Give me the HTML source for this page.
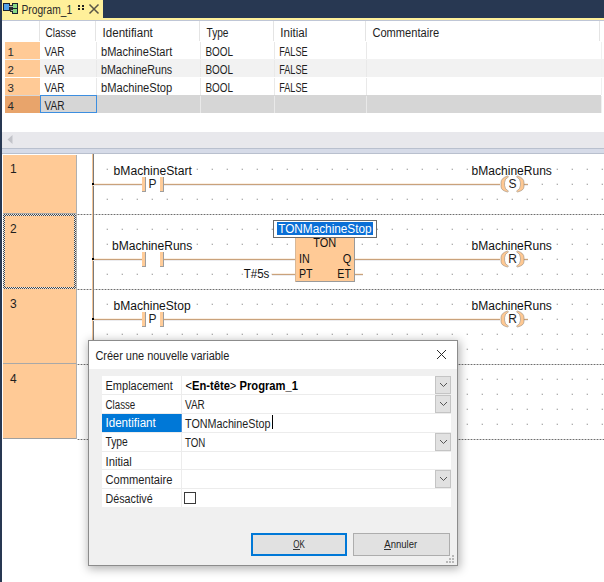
<!DOCTYPE html>
<html><head><meta charset="utf-8"><style>
html,body{margin:0;padding:0;background:#fff;overflow:hidden;}
svg{display:block;font-family:"Liberation Sans", sans-serif;}
</style></head><body>
<svg width="604" height="582" viewBox="0 0 604 582" shape-rendering="crispEdges">
<rect x="0" y="0" width="604" height="582" fill="#ffffff" />
<rect x="0" y="0" width="604" height="18" fill="#283852" />
<rect x="2" y="0" width="101" height="18" fill="#fff09a" />
<rect x="2" y="18" width="602" height="2" fill="#fff09a" />
<rect x="2" y="20" width="602" height="1" fill="#bfc6d6" />
<rect x="0" y="0" width="2" height="582" fill="#283852" />
<rect x="3" y="3" width="7" height="8" fill="#1b2230" />
<rect x="4" y="4" width="5" height="6" fill="#4fa0e8" />
<rect x="12" y="3" width="6" height="11" fill="#1b2230" />
<rect x="13" y="4" width="4" height="4" fill="#86d886" />
<rect x="13" y="9" width="4" height="4" fill="#86d886" />
<rect x="10" y="5" width="2" height="7" fill="#2d2d2d" />
<rect x="9" y="6" width="4" height="1" fill="#a8a8a8" />
<rect x="11" y="10" width="2" height="1" fill="#a8a8a8" />
<text x="21.5" y="14" font-size="12" textLength="50.6" lengthAdjust="spacingAndGlyphs" fill="#2a2a2a" >Program_1</text>
<rect x="78" y="5" width="2" height="2" fill="#222" />
<rect x="78" y="8" width="2" height="2" fill="#222" />
<rect x="82" y="5" width="2" height="2" fill="#222" />
<rect x="82" y="8" width="2" height="2" fill="#222" />
<path d="M89.5 4.5 L98.5 13.5 M98.5 4.5 L89.5 13.5" stroke="#5a5546" stroke-width="1.5" shape-rendering="geometricPrecision"/>
<rect x="39" y="21" width="1" height="21" fill="#e4e4e4" />
<rect x="95" y="21" width="1" height="21" fill="#e4e4e4" />
<rect x="199" y="21" width="1" height="21" fill="#e4e4e4" />
<rect x="273" y="21" width="1" height="21" fill="#e4e4e4" />
<rect x="365" y="21" width="1" height="21" fill="#e4e4e4" />
<rect x="599" y="21" width="1" height="21" fill="#e4e4e4" />
<text x="45.6" y="36.8" font-size="12" textLength="30.5" lengthAdjust="spacingAndGlyphs" fill="#1e1e1e" >Classe</text>
<text x="102.6" y="36.8" font-size="12" textLength="50.2" lengthAdjust="spacingAndGlyphs" fill="#1e1e1e" >Identifiant</text>
<text x="206.5" y="36.8" font-size="12" textLength="22" lengthAdjust="spacingAndGlyphs" fill="#1e1e1e" >Type</text>
<text x="280.3" y="36.8" font-size="12" textLength="27" lengthAdjust="spacingAndGlyphs" fill="#1e1e1e" >Initial</text>
<text x="372.4" y="36.8" font-size="12" textLength="66.7" lengthAdjust="spacingAndGlyphs" fill="#1e1e1e" >Commentaire</text>
<rect x="5" y="41" width="599" height="18" fill="#ffffff" />
<rect x="5" y="42" width="35" height="17" fill="#ffca96" />
<line x1="96.5" y1="42" x2="96.5" y2="59" stroke="#e9e9e9" stroke-width="1" />
<line x1="200.5" y1="42" x2="200.5" y2="59" stroke="#e9e9e9" stroke-width="1" />
<line x1="274.5" y1="42" x2="274.5" y2="59" stroke="#e9e9e9" stroke-width="1" />
<line x1="366.5" y1="42" x2="366.5" y2="59" stroke="#e9e9e9" stroke-width="1" />
<line x1="601.5" y1="42" x2="601.5" y2="59" stroke="#f0f0f0" stroke-width="1" />
<text x="7.5" y="55.8" font-size="11.5" fill="#2a2a2a" >1</text>
<text x="44.5" y="55.8" font-size="12" textLength="20" lengthAdjust="spacingAndGlyphs" fill="#1e1e1e" >VAR</text>
<text x="101" y="55.8" font-size="12" textLength="71.2" lengthAdjust="spacingAndGlyphs" fill="#1e1e1e" >bMachineStart</text>
<text x="205.4" y="55.8" font-size="12" textLength="27.6" lengthAdjust="spacingAndGlyphs" fill="#1e1e1e" >BOOL</text>
<text x="279.2" y="55.8" font-size="12" textLength="28.4" lengthAdjust="spacingAndGlyphs" fill="#1e1e1e" >FALSE</text>
<rect x="5" y="59" width="599" height="18" fill="#f2f2f2" />
<rect x="5" y="60" width="35" height="17" fill="#ffca96" />
<line x1="96.5" y1="60" x2="96.5" y2="77" stroke="#e9e9e9" stroke-width="1" />
<line x1="200.5" y1="60" x2="200.5" y2="77" stroke="#e9e9e9" stroke-width="1" />
<line x1="274.5" y1="60" x2="274.5" y2="77" stroke="#e9e9e9" stroke-width="1" />
<line x1="366.5" y1="60" x2="366.5" y2="77" stroke="#e9e9e9" stroke-width="1" />
<line x1="601.5" y1="60" x2="601.5" y2="77" stroke="#f0f0f0" stroke-width="1" />
<text x="7.5" y="73.8" font-size="11.5" fill="#2a2a2a" >2</text>
<text x="44.5" y="73.8" font-size="12" textLength="20" lengthAdjust="spacingAndGlyphs" fill="#1e1e1e" >VAR</text>
<text x="101" y="73.8" font-size="12" textLength="71.2" lengthAdjust="spacingAndGlyphs" fill="#1e1e1e" >bMachineRuns</text>
<text x="205.4" y="73.8" font-size="12" textLength="27.6" lengthAdjust="spacingAndGlyphs" fill="#1e1e1e" >BOOL</text>
<text x="279.2" y="73.8" font-size="12" textLength="28.4" lengthAdjust="spacingAndGlyphs" fill="#1e1e1e" >FALSE</text>
<rect x="5" y="77" width="599" height="18" fill="#ffffff" />
<rect x="5" y="78" width="35" height="17" fill="#ffca96" />
<line x1="96.5" y1="78" x2="96.5" y2="95" stroke="#e9e9e9" stroke-width="1" />
<line x1="200.5" y1="78" x2="200.5" y2="95" stroke="#e9e9e9" stroke-width="1" />
<line x1="274.5" y1="78" x2="274.5" y2="95" stroke="#e9e9e9" stroke-width="1" />
<line x1="366.5" y1="78" x2="366.5" y2="95" stroke="#e9e9e9" stroke-width="1" />
<line x1="601.5" y1="78" x2="601.5" y2="95" stroke="#f0f0f0" stroke-width="1" />
<text x="7.5" y="91.8" font-size="11.5" fill="#2a2a2a" >3</text>
<text x="44.5" y="91.8" font-size="12" textLength="20" lengthAdjust="spacingAndGlyphs" fill="#1e1e1e" >VAR</text>
<text x="101" y="91.8" font-size="12" textLength="71.2" lengthAdjust="spacingAndGlyphs" fill="#1e1e1e" >bMachineStop</text>
<text x="205.4" y="91.8" font-size="12" textLength="27.6" lengthAdjust="spacingAndGlyphs" fill="#1e1e1e" >BOOL</text>
<text x="279.2" y="91.8" font-size="12" textLength="28.4" lengthAdjust="spacingAndGlyphs" fill="#1e1e1e" >FALSE</text>
<rect x="5" y="95" width="596" height="18" fill="#d6d6d6" />
<rect x="5" y="96" width="35" height="17" fill="#e8a46b" />
<line x1="96.5" y1="96" x2="96.5" y2="113" stroke="#e9e9e9" stroke-width="1" />
<line x1="200.5" y1="96" x2="200.5" y2="113" stroke="#e9e9e9" stroke-width="1" />
<line x1="274.5" y1="96" x2="274.5" y2="113" stroke="#e9e9e9" stroke-width="1" />
<line x1="366.5" y1="96" x2="366.5" y2="113" stroke="#e9e9e9" stroke-width="1" />
<line x1="601.5" y1="96" x2="601.5" y2="113" stroke="#f0f0f0" stroke-width="1" />
<text x="7.5" y="109.8" font-size="11.5" fill="#2a2a2a" >4</text>
<text x="44.5" y="109.8" font-size="12" textLength="20" lengthAdjust="spacingAndGlyphs" fill="#1e1e1e" >VAR</text>
<rect x="40.5" y="95.5" width="56" height="17" fill="none" stroke="#3c8ee0" stroke-width="1"/>
<rect x="2" y="132" width="602" height="16" fill="#e8e8ec" />
<path d="M7.5 139.5 L12.5 135 L12.5 144 Z" fill="#c2c3c9" shape-rendering="geometricPrecision"/>
<rect x="2" y="148" width="602" height="1" fill="#b9c0ce" />
<rect x="2" y="149" width="602" height="4" fill="#d6dbe8" />
<rect x="2" y="153" width="602" height="1" fill="#b9c0ce" />
<rect x="3" y="155" width="73" height="284" fill="#ffca96" />
<line x1="76.5" y1="155" x2="76.5" y2="439" stroke="#b0b0b0" stroke-width="1" />
<line x1="3" y1="213.5" x2="76" y2="213.5" stroke="#a8a8a8" stroke-width="1" />
<line x1="3" y1="363.5" x2="76" y2="363.5" stroke="#a8a8a8" stroke-width="1" />
<line x1="3" y1="438.5" x2="76" y2="438.5" stroke="#a0a0a0" stroke-width="1" />
<defs><pattern id="chk" width="2" height="2" patternUnits="userSpaceOnUse"><rect width="1" height="1" fill="#484848"/><rect x="1" y="1" width="1" height="1" fill="#484848"/><rect x="1" width="1" height="1" fill="#e8e8e8"/><rect y="1" width="1" height="1" fill="#e8e8e8"/></pattern><pattern id="dots" x="2" y="4" width="15" height="15" patternUnits="userSpaceOnUse"><rect width="1" height="1" fill="#7a7a7a"/></pattern></defs>
<path d="M3 214 H76 V289 H3 Z M5 216 V287 H74 V216 Z" fill="url(#chk)" fill-rule="evenodd"/>
<text x="10" y="172.6" font-size="12" fill="#1e1e1e" >1</text>
<text x="10" y="232.6" font-size="12" fill="#1e1e1e" >2</text>
<text x="10" y="307.6" font-size="12" fill="#1e1e1e" >3</text>
<text x="10" y="382.6" font-size="12" fill="#1e1e1e" >4</text>
<defs><pattern id="dp154" x="1" y="168" width="15" height="15" patternUnits="userSpaceOnUse"><rect x="0" y="0" width="1" height="1" fill="#f4f4f4"/><rect x="1" y="0" width="1" height="1" fill="#e4e4e4"/><rect x="0" y="1" width="1" height="1" fill="#e4e4e4"/><rect x="1" y="1" width="1" height="1" fill="#b0b0b0"/></pattern></defs>
<rect x="105" y="168" width="499" height="45" fill="url(#dp154)" />
<defs><pattern id="dp214" x="1" y="228" width="15" height="15" patternUnits="userSpaceOnUse"><rect x="0" y="0" width="1" height="1" fill="#f4f4f4"/><rect x="1" y="0" width="1" height="1" fill="#e4e4e4"/><rect x="0" y="1" width="1" height="1" fill="#e4e4e4"/><rect x="1" y="1" width="1" height="1" fill="#b0b0b0"/></pattern></defs>
<rect x="105" y="228" width="499" height="60" fill="url(#dp214)" />
<defs><pattern id="dp289" x="1" y="303" width="15" height="15" patternUnits="userSpaceOnUse"><rect x="0" y="0" width="1" height="1" fill="#f4f4f4"/><rect x="1" y="0" width="1" height="1" fill="#e4e4e4"/><rect x="0" y="1" width="1" height="1" fill="#e4e4e4"/><rect x="1" y="1" width="1" height="1" fill="#b0b0b0"/></pattern></defs>
<rect x="105" y="303" width="499" height="60" fill="url(#dp289)" />
<defs><pattern id="dp364" x="1" y="378" width="15" height="15" patternUnits="userSpaceOnUse"><rect x="0" y="0" width="1" height="1" fill="#f4f4f4"/><rect x="1" y="0" width="1" height="1" fill="#e4e4e4"/><rect x="0" y="1" width="1" height="1" fill="#e4e4e4"/><rect x="1" y="1" width="1" height="1" fill="#b0b0b0"/></pattern></defs>
<rect x="105" y="378" width="499" height="60" fill="url(#dp364)" />
<rect x="77" y="214" width="527" height="1" fill="#c4c4c4" />
<line x1="78" y1="214.5" x2="604" y2="214.5" stroke="#6e6e6e" stroke-dasharray="1 2"/>
<rect x="77" y="289" width="527" height="1" fill="#c4c4c4" />
<line x1="78" y1="289.5" x2="604" y2="289.5" stroke="#6e6e6e" stroke-dasharray="1 2"/>
<rect x="77" y="364" width="527" height="1" fill="#c4c4c4" />
<line x1="78" y1="364.5" x2="604" y2="364.5" stroke="#6e6e6e" stroke-dasharray="1 2"/>
<rect x="77" y="439" width="527" height="1" fill="#c4c4c4" />
<line x1="78" y1="439.5" x2="604" y2="439.5" stroke="#6e6e6e" stroke-dasharray="1 2"/>
<rect x="92" y="154" width="1" height="285" fill="#f3c394" />
<rect x="93" y="154" width="1" height="285" fill="#7a7a7a" />
<rect x="112.6" y="164.6" width="80.3" height="13" fill="#fff" />
<text x="113.6" y="174.6" font-size="12" textLength="78.3" lengthAdjust="spacingAndGlyphs" fill="#111" >bMachineStart</text>
<rect x="470.6" y="164.6" width="82.3" height="13" fill="#fff" />
<text x="471.6" y="174.6" font-size="12" textLength="80.3" lengthAdjust="spacingAndGlyphs" fill="#111" >bMachineRuns</text>
<rect x="93" y="183" width="49" height="1" fill="#fbefe2" />
<rect x="93" y="184" width="49" height="1" fill="#c9a27c" />
<rect x="93" y="185" width="49" height="1" fill="#ececef" />
<rect x="164" y="183" width="336" height="1" fill="#fbefe2" />
<rect x="164" y="184" width="336" height="1" fill="#c9a27c" />
<rect x="164" y="185" width="336" height="1" fill="#ececef" />
<rect x="524" y="183" width="4" height="1" fill="#fbefe2" />
<rect x="524" y="184" width="4" height="1" fill="#c9a27c" />
<rect x="524" y="185" width="4" height="1" fill="#ececef" />
<rect x="92" y="183" width="2" height="2" fill="#000" />
<rect x="146" y="176" width="14" height="17" fill="#fff" />
<rect x="142" y="177" width="4" height="15" fill="#ffcc99" stroke="#b9a48f" stroke-width="0"/>
<rect x="145" y="177" width="1" height="15" fill="#9e9e9e" />
<rect x="142" y="191" width="4" height="1" fill="#9e9e9e" />
<rect x="160" y="177" width="4" height="15" fill="#ffcc99" stroke="#b9a48f" stroke-width="0"/>
<rect x="163" y="177" width="1" height="15" fill="#9e9e9e" />
<rect x="160" y="191" width="4" height="1" fill="#9e9e9e" />
<text x="148.5" y="188" font-size="12" fill="#1e1e1e" >P</text>
<path d="M507.5 176 Q501 178 501 182.5 L501 186.5 Q501 190.5 507.5 192 L508.5 191.2 Q504.6 189 504.6 185.5 L504.6 182.5 Q504.6 179 508.5 176.8 Z" fill="#ffc892" stroke="#8c8276" stroke-width="0.6" stroke-opacity="0.9" shape-rendering="geometricPrecision"/>
<path d="M517.5 176 Q524 178 524 182.5 L524 186.5 Q524 190.5 517.5 192 L516.5 191.2 Q520.4 189 520.4 185.5 L520.4 182.5 Q520.4 179 516.5 176.8 Z" fill="#ffc892" stroke="#8c8276" stroke-width="0.6" stroke-opacity="0.9" shape-rendering="geometricPrecision"/>
<text x="512.5" y="188" font-size="12" text-anchor="middle" fill="#1e1e1e" >S</text>
<rect x="111" y="239.7" width="82.3" height="13" fill="#fff" />
<text x="112" y="249.7" font-size="12" textLength="80.3" lengthAdjust="spacingAndGlyphs" fill="#111" >bMachineRuns</text>
<rect x="470.6" y="239.7" width="82.3" height="13" fill="#fff" />
<text x="471.6" y="249.7" font-size="12" textLength="80.3" lengthAdjust="spacingAndGlyphs" fill="#111" >bMachineRuns</text>
<rect x="93" y="258" width="49" height="1" fill="#fbefe2" />
<rect x="93" y="259" width="49" height="1" fill="#c9a27c" />
<rect x="93" y="260" width="49" height="1" fill="#ececef" />
<rect x="164" y="258" width="131" height="1" fill="#fbefe2" />
<rect x="164" y="259" width="131" height="1" fill="#c9a27c" />
<rect x="164" y="260" width="131" height="1" fill="#ececef" />
<rect x="355" y="258" width="145" height="1" fill="#fbefe2" />
<rect x="355" y="259" width="145" height="1" fill="#c9a27c" />
<rect x="355" y="260" width="145" height="1" fill="#ececef" />
<rect x="524" y="258" width="4" height="1" fill="#fbefe2" />
<rect x="524" y="259" width="4" height="1" fill="#c9a27c" />
<rect x="524" y="260" width="4" height="1" fill="#ececef" />
<rect x="92" y="258" width="2" height="2" fill="#000" />
<rect x="146" y="251" width="14" height="17" fill="#fff" />
<rect x="142" y="252" width="4" height="15" fill="#ffcc99" stroke="#b9a48f" stroke-width="0"/>
<rect x="145" y="252" width="1" height="15" fill="#9e9e9e" />
<rect x="142" y="266" width="4" height="1" fill="#9e9e9e" />
<rect x="160" y="252" width="4" height="15" fill="#ffcc99" stroke="#b9a48f" stroke-width="0"/>
<rect x="163" y="252" width="1" height="15" fill="#9e9e9e" />
<rect x="160" y="266" width="4" height="1" fill="#9e9e9e" />
<path d="M507.5 251 Q501 253 501 257.5 L501 261.5 Q501 265.5 507.5 267 L508.5 266.2 Q504.6 264 504.6 260.5 L504.6 257.5 Q504.6 254 508.5 251.8 Z" fill="#ffc892" stroke="#8c8276" stroke-width="0.6" stroke-opacity="0.9" shape-rendering="geometricPrecision"/>
<path d="M517.5 251 Q524 253 524 257.5 L524 261.5 Q524 265.5 517.5 267 L516.5 266.2 Q520.4 264 520.4 260.5 L520.4 257.5 Q520.4 254 516.5 251.8 Z" fill="#ffc892" stroke="#8c8276" stroke-width="0.6" stroke-opacity="0.9" shape-rendering="geometricPrecision"/>
<text x="512.5" y="263" font-size="12" text-anchor="middle" fill="#1e1e1e" >R</text>
<rect x="242.7" y="268" width="28" height="13" fill="#fff" />
<text x="243.7" y="278" font-size="12" textLength="25.7" lengthAdjust="spacingAndGlyphs" fill="#111" >T#5s</text>
<rect x="272" y="273" width="23" height="1" fill="#fbefe2" />
<rect x="272" y="274" width="23" height="1" fill="#c9a27c" />
<rect x="272" y="275" width="23" height="1" fill="#ececef" />
<rect x="355" y="273" width="8" height="1" fill="#fbefe2" />
<rect x="355" y="274" width="8" height="1" fill="#c9a27c" />
<rect x="355" y="275" width="8" height="1" fill="#ececef" />
<rect x="295" y="237" width="60" height="44" fill="#ffca96" />
<rect x="354" y="237" width="1" height="45" fill="#9a9a9a" />
<rect x="295" y="281" width="60" height="1" fill="#9a9a9a" />
<rect x="295" y="237" width="1" height="45" fill="#d8b898" />
<text x="313.2" y="247.2" font-size="12" textLength="23" lengthAdjust="spacingAndGlyphs" fill="#111" >TON</text>
<text x="299" y="262.8" font-size="12" textLength="10.7" lengthAdjust="spacingAndGlyphs" fill="#111" >IN</text>
<text x="342.7" y="262.8" font-size="12" textLength="8.5" lengthAdjust="spacingAndGlyphs" fill="#111" >Q</text>
<text x="299" y="277.9" font-size="12" textLength="13.6" lengthAdjust="spacingAndGlyphs" fill="#111" >PT</text>
<text x="337.3" y="277.9" font-size="12" textLength="13.7" lengthAdjust="spacingAndGlyphs" fill="#111" >ET</text>
<rect x="273" y="220.5" width="103" height="16.5" fill="#fff" stroke="#6a6a6a" stroke-width="1"/>
<rect x="277" y="222" width="96" height="13" fill="#0a6fd6" />
<text x="278.2" y="233.2" font-size="12" textLength="93.4" lengthAdjust="spacingAndGlyphs" fill="#fff" >TONMachineStop</text>
<rect x="112.6" y="299.7" width="74" height="13" fill="#fff" />
<text x="113.6" y="309.7" font-size="12" textLength="77" lengthAdjust="spacingAndGlyphs" fill="#111" >bMachineStop</text>
<rect x="470.6" y="299.7" width="82.3" height="13" fill="#fff" />
<text x="471.6" y="309.7" font-size="12" textLength="80.3" lengthAdjust="spacingAndGlyphs" fill="#111" >bMachineRuns</text>
<rect x="93" y="318" width="49" height="1" fill="#fbefe2" />
<rect x="93" y="319" width="49" height="1" fill="#c9a27c" />
<rect x="93" y="320" width="49" height="1" fill="#ececef" />
<rect x="164" y="318" width="336" height="1" fill="#fbefe2" />
<rect x="164" y="319" width="336" height="1" fill="#c9a27c" />
<rect x="164" y="320" width="336" height="1" fill="#ececef" />
<rect x="524" y="318" width="4" height="1" fill="#fbefe2" />
<rect x="524" y="319" width="4" height="1" fill="#c9a27c" />
<rect x="524" y="320" width="4" height="1" fill="#ececef" />
<rect x="92" y="318" width="2" height="2" fill="#000" />
<rect x="146" y="311" width="14" height="17" fill="#fff" />
<rect x="142" y="312" width="4" height="15" fill="#ffcc99" stroke="#b9a48f" stroke-width="0"/>
<rect x="145" y="312" width="1" height="15" fill="#9e9e9e" />
<rect x="142" y="326" width="4" height="1" fill="#9e9e9e" />
<rect x="160" y="312" width="4" height="15" fill="#ffcc99" stroke="#b9a48f" stroke-width="0"/>
<rect x="163" y="312" width="1" height="15" fill="#9e9e9e" />
<rect x="160" y="326" width="4" height="1" fill="#9e9e9e" />
<text x="148.5" y="323" font-size="12" fill="#1e1e1e" >P</text>
<path d="M507.5 311 Q501 313 501 317.5 L501 321.5 Q501 325.5 507.5 327 L508.5 326.2 Q504.6 324 504.6 320.5 L504.6 317.5 Q504.6 314 508.5 311.8 Z" fill="#ffc892" stroke="#8c8276" stroke-width="0.6" stroke-opacity="0.9" shape-rendering="geometricPrecision"/>
<path d="M517.5 311 Q524 313 524 317.5 L524 321.5 Q524 325.5 517.5 327 L516.5 326.2 Q520.4 324 520.4 320.5 L520.4 317.5 Q520.4 314 516.5 311.8 Z" fill="#ffc892" stroke="#8c8276" stroke-width="0.6" stroke-opacity="0.9" shape-rendering="geometricPrecision"/>
<text x="512.5" y="323" font-size="12" text-anchor="middle" fill="#1e1e1e" >R</text>
<defs><filter id="sh" x="-20%" y="-20%" width="140%" height="140%"><feGaussianBlur stdDeviation="5"/></filter></defs>
<rect x="88" y="341" width="372" height="228" fill="rgba(0,0,0,0.30)" filter="url(#sh)"/>
<rect x="88" y="340" width="370" height="226" fill="#8c8c8c" />
<rect x="89" y="341" width="368" height="224" fill="#f0f0f0" />
<rect x="89" y="341" width="368" height="28" fill="#ffffff" />
<text x="95.4" y="359.8" font-size="12" textLength="134" lengthAdjust="spacingAndGlyphs" fill="#1e1e1e" >Créer une nouvelle variable</text>
<path d="M437 350 L446 359 M446 350 L437 359" stroke="#2a2a2a" stroke-width="1" shape-rendering="geometricPrecision"/>
<rect x="102" y="376" width="349" height="131" fill="#ffffff" />
<line x1="102" y1="394.5" x2="451" y2="394.5" stroke="#ececec" stroke-width="1" />
<line x1="102" y1="413.5" x2="451" y2="413.5" stroke="#ececec" stroke-width="1" />
<line x1="102" y1="432" x2="451" y2="432" stroke="#ececec" stroke-width="1" />
<line x1="102" y1="451" x2="451" y2="451" stroke="#ececec" stroke-width="1" />
<line x1="102" y1="469.5" x2="451" y2="469.5" stroke="#ececec" stroke-width="1" />
<line x1="102" y1="488" x2="451" y2="488" stroke="#ececec" stroke-width="1" />
<line x1="181" y1="376" x2="181" y2="507" stroke="#ececec" stroke-width="1" />
<rect x="102" y="413.5" width="79" height="18.5" fill="#0078d7" />
<text x="105.5" y="390.3" font-size="12" textLength="67.3" lengthAdjust="spacingAndGlyphs" fill="#1e1e1e" >Emplacement</text>
<text x="105.5" y="409" font-size="12" textLength="29.8" lengthAdjust="spacingAndGlyphs" fill="#1e1e1e" >Classe</text>
<text x="105.5" y="427.3" font-size="12" textLength="50.3" lengthAdjust="spacingAndGlyphs" fill="#ffffff" >Identifiant</text>
<text x="105.5" y="446.4" font-size="12" textLength="22.3" lengthAdjust="spacingAndGlyphs" fill="#1e1e1e" >Type</text>
<text x="105.5" y="465.5" font-size="12" textLength="26.3" lengthAdjust="spacingAndGlyphs" fill="#1e1e1e" >Initial</text>
<text x="105.5" y="484" font-size="12" textLength="66.9" lengthAdjust="spacingAndGlyphs" fill="#1e1e1e" >Commentaire</text>
<text x="105.5" y="502.7" font-size="12" textLength="47.1" lengthAdjust="spacingAndGlyphs" fill="#1e1e1e" >Désactivé</text>
<text x="185.4" y="390" font-size="12" fill="#000" textLength="112.6" lengthAdjust="spacingAndGlyphs">&lt;<tspan font-weight="bold">En-tête</tspan>&gt; <tspan font-weight="bold">Program_1</tspan></text>
<text x="185" y="409" font-size="12" textLength="19.8" lengthAdjust="spacingAndGlyphs" fill="#1e1e1e" >VAR</text>
<text x="185" y="427.5" font-size="12" textLength="85.4" lengthAdjust="spacingAndGlyphs" fill="#1e1e1e" >TONMachineStop</text>
<rect x="271.5" y="414.7" width="1" height="14.7" fill="#000" />
<text x="185" y="446.6" font-size="12" textLength="20.4" lengthAdjust="spacingAndGlyphs" fill="#1e1e1e" >TON</text>
<rect x="181" y="414" width="1" height="18" fill="#4a90d9" />
<rect x="184.5" y="492.5" width="11" height="11" fill="#fff" stroke="#3a3a3a" stroke-width="1"/>
<rect x="435.5" y="376.5" width="15" height="17" fill="#e1e1e1" stroke="#c4c4c4" stroke-width="1"/>
<path d="M440 383 L443.5 386.5 L447 383" stroke="#555" stroke-width="1" fill="none" shape-rendering="geometricPrecision"/>
<rect x="435.5" y="395.5" width="15" height="17" fill="#e1e1e1" stroke="#c4c4c4" stroke-width="1"/>
<path d="M440 402 L443.5 405.5 L447 402" stroke="#555" stroke-width="1" fill="none" shape-rendering="geometricPrecision"/>
<rect x="435.5" y="433.5" width="15" height="17" fill="#e1e1e1" stroke="#c4c4c4" stroke-width="1"/>
<path d="M440 440 L443.5 443.5 L447 440" stroke="#555" stroke-width="1" fill="none" shape-rendering="geometricPrecision"/>
<rect x="435.5" y="470.5" width="15" height="17" fill="#e1e1e1" stroke="#c4c4c4" stroke-width="1"/>
<path d="M440 477 L443.5 480.5 L447 477" stroke="#555" stroke-width="1" fill="none" shape-rendering="geometricPrecision"/>
<rect x="252" y="534" width="94" height="21" fill="#e1e1e1" stroke="#0078d7" stroke-width="2"/>
<text x="293.2" y="548" font-size="11" textLength="11.6" lengthAdjust="spacingAndGlyphs" fill="#1e1e1e" >OK</text>
<rect x="293" y="549" width="7" height="1" fill="#333" />
<rect x="353.5" y="533.5" width="96" height="22" fill="#e1e1e1" stroke="#adadad" stroke-width="1"/>
<text x="384.3" y="548" font-size="11" textLength="32.8" lengthAdjust="spacingAndGlyphs" fill="#1e1e1e" >Annuler</text>
<rect x="384" y="549" width="7" height="1" fill="#333" />
<rect x="452" y="555" width="2" height="2" fill="#b8b8b8" />
<rect x="449" y="558" width="2" height="2" fill="#b8b8b8" />
<rect x="452" y="558" width="2" height="2" fill="#b8b8b8" />
<rect x="446" y="561" width="2" height="2" fill="#b8b8b8" />
<rect x="449" y="561" width="2" height="2" fill="#b8b8b8" />
<rect x="452" y="561" width="2" height="2" fill="#b8b8b8" />
</svg>
</body></html>
